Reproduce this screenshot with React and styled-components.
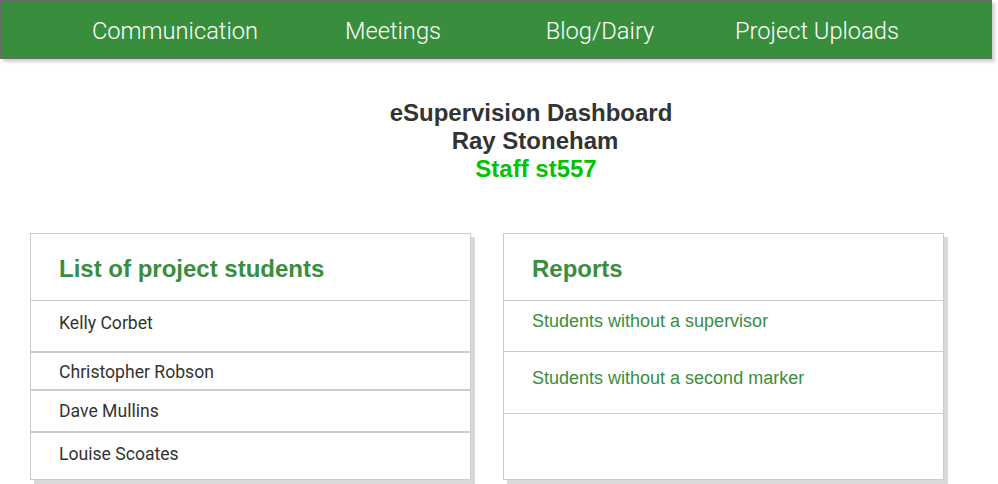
import React from "react";
import styled, { createGlobalStyle } from "styled-components";

const Global = createGlobalStyle`
  html, body { margin: 0; padding: 0; background: #fff; }
  body { font-family: "Liberation Sans", Arial, sans-serif; }
  * { box-sizing: border-box; }
`;

const Page = styled.div`
  width: 998px;
  height: 484px;
  overflow: hidden;
`;

const Nav = styled.nav`
  height: 59px;
  margin-right: 6px;
  background: #388e3c;
  border: 1px solid #6b6b6b;
  box-shadow: 3px 3px 3px rgba(0, 0, 0, 0.18);
  display: grid;
  grid-template-columns: 218px 218px 196px 238px;
  padding-left: 65px;
  padding-top: 4px;
  align-items: center;
`;

const NavItem = styled.a`
  font-family: Roboto, "Liberation Sans", sans-serif;
  font-weight: 300;
  font-size: 23.7px;
  color: #fff;
  text-align: center;
  text-decoration: none;
  line-height: 1;
`;

const Header = styled.header`
  margin-top: 40px;
  padding-left: 64px;
  display: flex;
  flex-direction: column;
  align-items: center;
`;

const HeadLine = styled.div`
  font-family: "Liberation Sans", Arial, sans-serif;
  font-weight: 700;
  font-size: 24px;
  line-height: 28px;
  padding-left: ${(p) => p.$shift || 0}px;
  color: ${(p) => (p.$accent ? "#00c400" : "#333")};
`;

const Cards = styled.div`
  margin-top: 50px;
  padding-left: 30px;
  display: flex;
  gap: 32px;
  align-items: flex-start;
`;

const Card = styled.section`
  width: 441px;
  height: 247px;
  border: 1px solid #cccccc;
  box-shadow: 4px 4px 0 #d9d9d9;
  background: #fff;
  display: flex;
  flex-direction: column;
`;

const CardHead = styled.div`
  height: 67px;
  border-bottom: 1px solid #cccccc;
  padding: 21px 0 0 28px;
  font-family: "Liberation Sans", Arial, sans-serif;
  font-weight: 700;
  font-size: 24px;
  line-height: 28px;
  color: #388e3c;
`;

const Row = styled.div`
  height: ${(p) => p.$h}px;
  padding: ${(p) => p.$pt}px 0 0 28px;
  border-top: ${(p) => (p.$top ? "1px solid #cccccc" : "none")};
  border-bottom: ${(p) => (p.$last ? "none" : "1px solid #cccccc")};
  font-family: Roboto, "Liberation Sans", sans-serif;
  font-size: 17.6px;
  line-height: 20px;
  color: #333;
`;

const LinkRow = styled.div`
  height: ${(p) => p.$h}px;
  padding: ${(p) => p.$pt}px 0 0 28px;
  border-bottom: ${(p) => (p.$last ? "none" : "1px solid #cccccc")};
  flex: ${(p) => (p.$last ? 1 : "none")};
`;

const ReportLink = styled.a`
  font-family: "Liberation Sans", Arial, sans-serif;
  font-size: 18px;
  line-height: 20px;
  color: #388e3c;
  text-decoration: none;
`;

const students = [
  { name: "Kelly Corbet", h: 51, pt: 12 },
  { name: "Christopher Robson", h: 38, pt: 9, top: true },
  { name: "Dave Mullins", h: 42, pt: 10, top: true },
  { name: "Louise Scoates", h: 47, pt: 11, top: true, last: true },
];

export default function App() {
  return (
    <Page>
      <Global />
      <Nav>
        <NavItem>Communication</NavItem>
        <NavItem>Meetings</NavItem>
        <NavItem>Blog/Dairy</NavItem>
        <NavItem>Project Uploads</NavItem>
      </Nav>
      <Header>
        <HeadLine>eSupervision Dashboard</HeadLine>
        <HeadLine $shift={8}>Ray Stoneham</HeadLine>
        <HeadLine $accent $shift={10}>Staff st557</HeadLine>
      </Header>
      <Cards>
        <Card>
          <CardHead>List of project students</CardHead>
          {students.map((s) => (
            <Row key={s.name} $h={s.h} $pt={s.pt} $top={s.top} $last={s.last}>
              {s.name}
            </Row>
          ))}
        </Card>
        <Card>
          <CardHead>Reports</CardHead>
          <LinkRow $h={51} $pt={10}>
            <ReportLink>Students without a supervisor</ReportLink>
          </LinkRow>
          <LinkRow $h={62} $pt={16}>
            <ReportLink>Students without a second marker</ReportLink>
          </LinkRow>
          <LinkRow $last />
        </Card>
      </Cards>
    </Page>
  );
}
